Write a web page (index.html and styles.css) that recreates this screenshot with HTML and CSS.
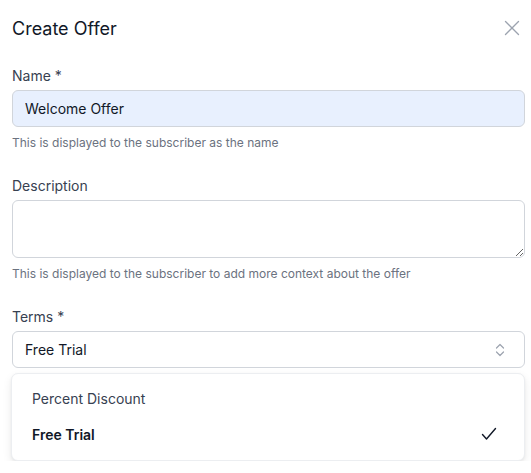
FILE: index.html
```html
<!DOCTYPE html>
<html lang="en">
<head>
<meta charset="utf-8">
<title>Create Offer</title>
<link rel="stylesheet" href="styles.css">
</head>
<body>
<div class="dialog">
  <div class="header">
    <h1 class="title">Create Offer</h1>
    <button class="close" aria-label="Close">
      <svg width="16" height="16" viewBox="0 0 16 16" fill="none" stroke="currentColor" stroke-width="1.3" stroke-linecap="round"><path d="M1.5 1.5l13 13M14.5 1.5l-13 13"/></svg>
    </button>
  </div>
  <div class="field">
    <label class="label">Name *</label>
    <input class="input filled" type="text" value="Welcome Offer">
    <p class="hint">This is displayed to the subscriber as the name</p>
  </div>
  <div class="field">
    <label class="label">Description</label>
    <textarea class="input area"></textarea>
    <p class="hint">This is displayed to the subscriber to add more context about the offer</p>
  </div>
  <div class="field">
    <label class="label">Terms *</label>
    <div class="select">
      <span>Free Trial</span>
      <svg class="chev" width="10" height="14" viewBox="0 0 10 14" fill="none" stroke="currentColor" stroke-width="1.2" stroke-linecap="round" stroke-linejoin="round"><path d="M1.5 5L5 1.5 8.5 5M1.5 9L5 12.5 8.5 9"/></svg>
    </div>
    <div class="menu">
      <div class="option">Percent Discount</div>
      <div class="option selected">Free Trial
        <svg width="16" height="14" viewBox="0 0 16 14" fill="none" stroke="currentColor" stroke-width="1.4" stroke-linecap="round" stroke-linejoin="round"><path d="M1.5 7.5l4 4.5L14.5 1.5"/></svg>
      </div>
    </div>
  </div>
</div>
</body>
</html>
```
FILE: styles.css
```css
* { box-sizing: border-box; }
html, body { margin: 0; padding: 0; background: #fff; }
body { font-family: Inter, "Noto Sans", sans-serif; color: #111827; }
.dialog { padding: 0 6px 0 12px; display: flex; flex-direction: column; }
.header { height: 56px; display: flex; align-items: center; justify-content: space-between; }
.title { margin: 0; font-size: 18px; font-weight: 400; color: #111827; }
.close { border: 0; background: none; padding: 0; margin-right: 5px; color: #9ca3af; display: flex; }
.field { display: flex; flex-direction: column; margin-top: 10px; }
.field + .field { margin-top: 25px; }
.label { font-size: 14px; line-height: 20px; color: #374151; font-weight: 400; margin-bottom: 4px; }
.input { font-family: inherit; font-size: 14px; color: #111827; border: 1px solid #d1d5db; border-radius: 6px; background: #fff; width: 100%; outline: none; }
.filled { height: 37px; padding: 0 12px; background: #e8f0fe; }
.area { height: 58px; resize: vertical; display: block; padding: 8px 12px; }
.hint { margin: 8px 0 0; font-size: 12px; line-height: 16px; color: #6b7280; }
.select { height: 37px; border: 1px solid #d1d5db; border-radius: 6px; display: flex; align-items: center; justify-content: space-between; padding: 0 19px 0 12px; font-size: 14px; color: #111827; }
.chev { color: #9ca3af; }
.menu { margin: 5px 0 0 -1px; border: 1px solid #eceef1; border-radius: 7px; background: #fff; box-shadow: 0 4px 10px rgba(0,0,0,0.08), 0 1px 3px rgba(0,0,0,0.05); padding: 6px 8px 8px; }
.option { height: 36px; display: flex; align-items: center; justify-content: space-between; padding: 0 19px 0 12px; font-size: 14px; color: #374151; }
.option.selected { font-weight: 600; color: #111827; }
.option svg { color: #111827; }
```
